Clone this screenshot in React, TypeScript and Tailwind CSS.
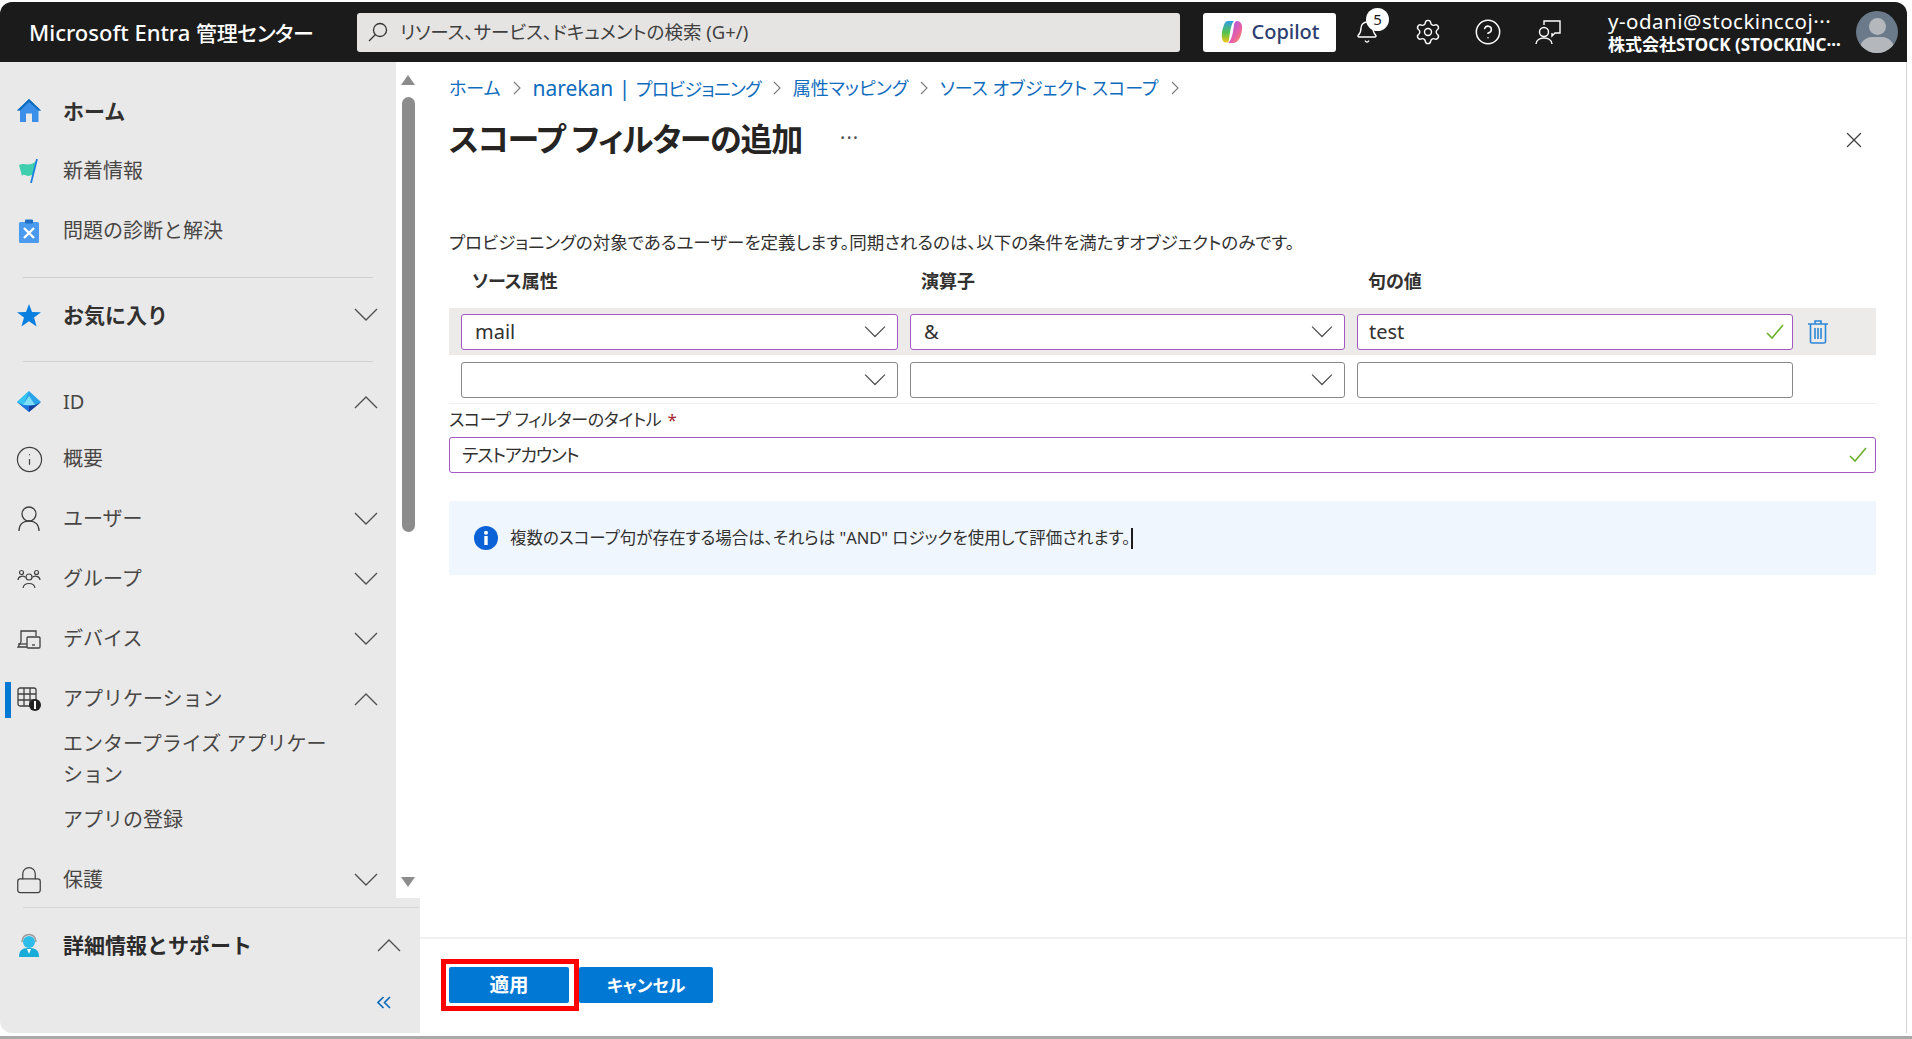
import { Bell, CircleHelp, Info, Lock, Settings, X } from "lucide-react";
import type { ReactNode } from "react";

const Chevron = ({ up = false, className = "" }: { up?: boolean; className?: string }) => (
  <svg viewBox="0 0 24 14" className={`w-6 h-[14px] ${className}`} fill="none" stroke="#505050" strokeWidth="1.4">
    <path d={up ? "M1 13 L12 2 L23 13" : "M1 1 L12 12 L23 1"} />
  </svg>
);

const Crumb = () => (
  <svg viewBox="0 0 8 14" className="w-2 h-[14px] mx-3 shrink-0" fill="none" stroke="#7a7a7a" strokeWidth="1.1">
    <path d="M1 1 L7 7 L1 13" />
  </svg>
);

const Check = () => (
  <svg viewBox="0 0 18 16" className="w-[18px] h-4" fill="none" stroke="#6bb12f" strokeWidth="1.6">
    <path d="M1 9 L6 14 L17 1" />
  </svg>
);

const HomeIcon = () => (
  <svg viewBox="0 0 24 24" className="w-6 h-6">
    <path d="M12 0 L24 11.5 L21.5 11.5 L21.5 23 L3 23 L3 11.5 L0 11.5 Z" fill="#3b8fe8" />
    <path d="M12 0 L24 11.5 L21.5 11.5 L12 3 L3 11.5 L0 11.5 Z" fill="#0f6cbd" />
    <rect x="9" y="14.5" width="6" height="8.5" fill="#e9e9e9" />
  </svg>
);

const FlagIcon = () => (
  <svg viewBox="0 0 24 24" className="w-6 h-6">
    <path d="M2 6 C8 3 13 9 20 1 L16 15 C10 20 7 13 5 17 Z" fill="#3fcfae" />
    <path d="M20 0 L14 24" stroke="#1f7fe0" strokeWidth="1.8" />
  </svg>
);

const ClipIcon = () => (
  <svg viewBox="0 0 24 24" className="w-6 h-6">
    <rect x="2" y="3" width="20" height="21" rx="1.5" fill="#4a9bf0" />
    <rect x="8" y="0.5" width="8" height="4" rx="1" fill="#1f6fc4" />
    <path d="M7 9 L17 19 M17 9 L7 19" stroke="#fff" strokeWidth="2.4" />
  </svg>
);

const StarIcon = () => (
  <svg viewBox="0 0 24 24" className="w-6 h-6">
    <path d="M12 1 L15 9 L24 9.2 L17 14.6 L19.6 23.4 L12 18.2 L4.4 23.4 L7 14.6 L0 9.2 L9 9 Z" fill="#0b7fe0" />
  </svg>
);

const EntraIcon = () => (
  <svg viewBox="0 0 24 24" className="w-6 h-6">
    <path d="M12 1 L24 12 L12 22 L0 12 Z" fill="#2aa3e8" />
    <path d="M12 1 L0 12 L6 16 Z" fill="#36c5f0" />
    <path d="M12 6 L18 15 L6 15 Z" fill="#7fe0f7" />
    <path d="M24 12 L12 22 L12 16 L18 15 Z" fill="#1b3f9c" />
    <path d="M0 12 L12 22 L12 16 L6 15 Z" fill="#2172d8" />
  </svg>
);

const UserIcon = () => (
  <svg viewBox="0 0 24 26" className="w-6 h-[26px]" fill="none" stroke="#404040" strokeWidth="1.3">
    <circle cx="12" cy="8" r="7" />
    <path d="M2 25 C2 18 6 15 12 15 C18 15 22 18 22 25" />
  </svg>
);

const GroupIcon = () => (
  <svg viewBox="0 0 24 24" className="w-6 h-6" fill="none" stroke="#404040" strokeWidth="1.2">
    <circle cx="12" cy="10" r="3" />
    <path d="M6 21 C7 15 17 15 18 21" />
    <circle cx="4.5" cy="5.5" r="2" />
    <circle cx="19.5" cy="5.5" r="2" />
    <path d="M1 13 C1 9 7 8 8.5 10.5 M23 13 C23 9 17 8 15.5 10.5" />
  </svg>
);

const DeviceIcon = () => (
  <svg viewBox="0 0 24 24" className="w-6 h-6" fill="none" stroke="#404040" strokeWidth="1.3">
    <path d="M4 15 L4 4 L19 4 L19 9" />
    <path d="M1 17 L10 17" />
    <rect x="10" y="10" width="13" height="11" rx="1" />
    <path d="M15 18 L18 18" />
    <path d="M4 15 L1 20 L10 20" />
  </svg>
);

const AppsIcon = () => (
  <svg viewBox="0 0 24 24" className="w-6 h-6">
    <g fill="none" stroke="#404040" strokeWidth="1.3">
      <rect x="1" y="1" width="18" height="18" rx="2" />
      <path d="M1 7 L19 7 M1 13 L19 13 M7 1 L7 19 M13 1 L13 19" />
    </g>
    <circle cx="18" cy="18" r="6" fill="#222" />
    <path d="M18 14 L18 22" stroke="#fff" strokeWidth="2" />
  </svg>
);

const SupportIcon = () => (
  <svg viewBox="0 0 24 24" className="w-6 h-6">
    <path d="M5 9 C5 -1 19 -1 19 9" fill="none" stroke="#9a9a9a" strokeWidth="1.5" />
    <circle cx="12" cy="9" r="6" fill="#2dbde8" />
    <path d="M2 24 C2 15 8 15 12 15 C16 15 22 15 22 24 Z" fill="#19acd8" />
    <path d="M10 16 L14 16 L12 21 Z" fill="#fff" />
  </svg>
);

const NavRow = ({
  icon,
  label,
  chevron,
  bold = false,
  height = "h-[60px]",
  active = false,
}: {
  icon: ReactNode;
  label: string;
  chevron?: "up" | "down";
  bold?: boolean;
  height?: string;
  active?: boolean;
}) => (
  <div className={`relative flex items-center ${height} pl-[17px] pr-[18px]`}>
    {active && <div className="absolute left-[5px] top-[13px] w-[6px] h-9 bg-[#0078d4]" />}
    <div className="w-6 h-6 flex items-center justify-center shrink-0">{icon}</div>
    <span className={`ml-[22px] flex-1 leading-none ${bold ? "text-[21px] font-bold text-[#323130]" : "text-[20px] text-[#484644]"}`}>
      {label}
    </span>
    {chevron && <Chevron up={chevron === "up"} />}
  </div>
);

const SelectBox = ({ value, active, width }: { value?: string; active?: boolean; width: string }) => (
  <div
    className={`${width} h-9 bg-white border rounded-[3px] flex items-center pl-[13px] pr-[10px] ${
      active ? "border-[#a259c4]" : "border-[#8a8886]"
    }`}
  >
    <span className="flex-1 text-[20px] leading-none text-[#323130]">{value}</span>
    <Chevron className="scale-90" />
  </div>
);

const TextBox = ({
  value,
  active,
  width,
  inset,
  text = "text-[20px]",
}: {
  value?: string;
  active?: boolean;
  width: string;
  inset: string;
  text?: string;
}) => (
  <div
    className={`${width} h-9 bg-white border rounded-[3px] flex items-center ${inset} pr-[8px] ${
      active ? "border-[#a259c4]" : "border-[#8a8886]"
    }`}
  >
    <span className={`flex-1 ${text} leading-none text-[#323130]`}>{value}</span>
    {active && <Check />}
  </div>
);

export default function App() {
  return (
    <div className="w-full h-screen overflow-hidden bg-white pt-[2px] flex flex-col font-['Noto_Sans','Noto_Sans_CJK_JP',sans-serif] [font-feature-settings:'palt']">
      <div className="h-[60px] w-[1907px] shrink-0 bg-[#1b1b1b] rounded-t-[12px] flex items-center text-white">
        <div className="w-[357px] pl-[29px] text-[22px] leading-none font-medium whitespace-nowrap">
          Microsoft Entra <span className="text-[21px] tracking-[-0.4px]">管理センター</span>
        </div>
        <div className="w-[823px] h-[39px] bg-[#e6e4e2] rounded-[3px] flex items-center pl-[11px] text-[#404040]">
          <svg viewBox="0 0 20 20" className="w-5 h-5" fill="none" stroke="#333" strokeWidth="1.3">
            <circle cx="12" cy="8" r="6.5" />
            <path d="M7.5 12.5 L1 19" />
          </svg>
          <span className="ml-[12px] text-[18.5px] leading-none">リソース、サービス、ドキュメントの検索 (G+/)</span>
        </div>
        <div className="ml-[23px] w-[133px] h-[39px] bg-white rounded-[3px] flex items-center justify-center">
          <svg viewBox="0 0 24 24" className="w-6 h-6">
            <defs>
              <linearGradient id="cp1" x1="0" y1="0" x2="0" y2="1">
                <stop offset="0" stopColor="#2f9ee8" />
                <stop offset="0.55" stopColor="#57c24a" />
                <stop offset="1" stopColor="#f5c518" />
              </linearGradient>
              <linearGradient id="cp2" x1="0" y1="0" x2="1" y2="1">
                <stop offset="0" stopColor="#8a5cf0" />
                <stop offset="0.6" stopColor="#e95fa8" />
                <stop offset="1" stopColor="#f59a3c" />
              </linearGradient>
            </defs>
            <path d="M8 1 L14 1 C11 4 10 12 9 20 C8.5 23 6 23 4 22 C1 20 1 12 4 5 C5 2 6 1 8 1 Z" fill="url(#cp1)" />
            <path d="M17 1 C20 1 23 4 22 10 C21 17 18 23 13 23 L8 23 C12 20 13 12 14 5 C14.5 2 15.5 1 17 1 Z" fill="url(#cp2)" />
          </svg>
          <span className="ml-[8px] text-[20px] leading-none font-medium text-[#2c3e70]">Copilot</span>
        </div>
        <div className="relative ml-[19px] w-6 h-6 flex items-center justify-center">
          <Bell className="w-6 h-6" strokeWidth={1.4} />
          <div className="absolute -top-[12px] left-[11px] w-[23px] h-[23px] rounded-full bg-white text-[#1b1b1b] text-[15px] leading-none flex items-center justify-center">
            5
          </div>
        </div>
        <Settings className="ml-[35px] w-7 h-7" strokeWidth={1.2} />
        <CircleHelp className="ml-[32px] w-7 h-7" strokeWidth={1.3} />
        <svg viewBox="0 0 26 26" className="ml-[33px] w-[26px] h-[26px]" fill="none" stroke="#fff" strokeWidth="1.4">
          <path d="M9 6 L9 2 L25 2 L25 14 L20 14 L17 17 L17 14" />
          <circle cx="9" cy="13" r="4.5" />
          <path d="M1 25 C1 17 17 17 17 25" />
        </svg>
        <div className="ml-[47px] w-[236px] flex flex-col gap-[1px]">
          <span className="text-[20.5px] tracking-[0.5px] leading-[25px] whitespace-nowrap">y-odani@stockinccoj···</span>
          <span className="text-[17px] leading-[20px] font-bold whitespace-nowrap">株式会社STOCK (STOCKINC···</span>
        </div>
        <div className="ml-[12px] w-[42px] h-[42px] rounded-full bg-[#6b7a8a] overflow-hidden flex flex-col items-center">
          <div className="mt-[7px] w-[17px] h-[20px] rounded-full bg-[#b4b8bc]" />
          <div className="mt-[2px] w-[34px] h-[20px] rounded-t-[12px] bg-[#b4b8bc]" />
        </div>
      </div>

      <div className="w-[1907px] flex-1 min-h-0 flex border-r border-[#d6d6d6]">
        <aside className="w-[420px] shrink-0 flex flex-col rounded-bl-[12px] overflow-hidden bg-[#e9e9e9] [font-feature-settings:normal]">
          <div className="h-[836px] flex bg-white">
            <nav className="w-[396px] h-full overflow-hidden bg-[#e9e9e9] pt-[19px]">
              <NavRow icon={<HomeIcon />} label="ホーム" bold />
              <NavRow icon={<FlagIcon />} label="新着情報" />
              <NavRow icon={<ClipIcon />} label="問題の診断と解決" />
              <div className="mx-[23px] mt-[16px] h-px bg-[#cfcfcf]" />
              <NavRow icon={<StarIcon />} label="お気に入り" bold chevron="down" height="h-[74px]" />
              <div className="mx-[23px] mt-[9px] h-px bg-[#cfcfcf]" />
              <div className="h-[13px]" />
              <NavRow icon={<EntraIcon />} label="ID" chevron="up" height="h-[54px]" />
              <NavRow icon={<Info className="w-[29px] h-[29px] shrink-0 text-[#404040]" strokeWidth={1} />} label="概要" />
              <NavRow icon={<UserIcon />} label="ユーザー" chevron="down" />
              <NavRow icon={<GroupIcon />} label="グループ" chevron="down" />
              <NavRow icon={<DeviceIcon />} label="デバイス" chevron="down" />
              <NavRow icon={<AppsIcon />} label="アプリケーション" chevron="up" active />
              <div className="pl-[63px] pr-[60px] -mt-[1px] text-[20px] leading-[31px] text-[#484644]">エンタープライズ アプリケーション</div>
              <div className="pl-[63px] mt-[14px] text-[20px] leading-[31px] text-[#484644]">アプリの登録</div>
              <div className="h-[15px]" />
              <NavRow icon={<Lock className="w-[30px] h-[30px] shrink-0 text-[#404040]" strokeWidth={1} />} label="保護" chevron="down" height="h-[59px]" />
            </nav>
            <div className="w-6 flex flex-col items-center">
              <div className="mt-[13px] w-0 h-0 border-x-[7px] border-x-transparent border-b-[10px] border-b-[#8c8c8c]" />
              <div className="mt-[12px] w-[13px] h-[435px] rounded-full bg-[#8c8c8c]" />
              <div className="mt-auto mb-[11px] w-0 h-0 border-x-[7px] border-x-transparent border-t-[10px] border-t-[#8c8c8c]" />
            </div>
          </div>
          <div className="flex-1 pt-[9px]">
            <div className="ml-[23px] mr-[1px] h-px bg-[#d6d6d6]" />
            <div className="relative flex items-center h-[74px] pl-[17px] pr-[19px]">
              <SupportIcon />
              <span className="ml-[22px] flex-1 text-[21px] leading-none font-bold text-[#2b2b2b]">詳細情報とサポート</span>
              <Chevron up />
            </div>
            <div className="flex justify-end pr-[29px] pt-[14px]">
              <svg viewBox="0 0 14 13" className="w-[14px] h-[13px]" fill="none" stroke="#0f6cbd" strokeWidth="1.7">
                <path d="M6.5 1 L1 6.5 L6.5 12 M13 1 L7.5 6.5 L13 12" />
              </svg>
            </div>
          </div>
        </aside>

        <main className="flex-1 min-w-0 flex flex-col pl-[29px] pr-[30px]">
          <div className="mt-[12px] h-7 flex items-center text-[18px] leading-none text-[#0f6cbd] whitespace-nowrap">
            <span>ホーム</span>
            <Crumb />
            <span>
              <span className="text-[21px]">narekan | </span>
              <span className="tracking-[-0.7px]">プロビジョニング</span>
            </span>
            <Crumb />
            <span>属性マッピング</span>
            <Crumb />
            <span>ソース オブジェクト スコープ</span>
            <Crumb />
          </div>
          <div className="mt-[15px] h-11 flex items-center">
            <h1 className="text-[32px] leading-none font-semibold tracking-[-1.2px] text-[#252423]">スコープ フィルターの追加</h1>
            <span className="ml-[38px] text-[20px] tracking-[1px] leading-none text-[#505050] -translate-y-[1px]">···</span>
            <X className="ml-auto mr-[9px] mt-[2px] w-[26px] h-[26px] text-[#404040]" strokeWidth={1.2} />
          </div>
          <div className="mt-[68px] h-7 flex items-center text-[17.5px] leading-none text-[#323130] whitespace-nowrap">
            プロビジョニングの対象であるユーザーを定義します。同期されるのは、以下の条件を満たすオブジェクトのみです。
          </div>
          <div className="mt-[10px] h-7 flex items-center text-[18px] leading-none font-bold text-[#323130]">
            <span className="ml-[23px] w-[449px]">ソース属性</span>
            <span className="w-[447px]">演算子</span>
            <span>句の値</span>
          </div>
          <div className="mt-[13px] h-[47px] bg-[#edebe9] flex items-center pl-[12px] gap-[12px]">
            <SelectBox value="mail" active width="w-[437px]" />
            <SelectBox value="&" active width="w-[435px]" />
            <TextBox value="test" active width="w-[436px]" inset="pl-[11px]" />
            <svg viewBox="0 0 20 24" className="ml-[3px] w-5 h-6" fill="none" stroke="#2b88d8" strokeWidth="1.6">
              <path d="M0 4 L20 4 M7 4 L7 1 L13 1 L13 4" />
              <path d="M2.5 4 L2.5 22 C2.5 23 3 23 4 23 L16 23 C17 23 17.5 23 17.5 22 L17.5 4" />
              <path d="M7 8 L7 19 M10 8 L10 19 M13 8 L13 19" />
            </svg>
          </div>
          <div className="h-[49px] border-b border-[#f0efee] flex items-start pt-[7px] pl-[12px] gap-[12px]">
            <SelectBox width="w-[437px]" />
            <SelectBox width="w-[435px]" />
            <TextBox width="w-[436px]" inset="pl-[11px]" />
          </div>
          <div className="h-7 flex items-center text-[17px] tracking-[-0.3px] leading-none text-[#323130] mt-px">
            スコープ フィルターのタイトル<span className="ml-[6px] text-[#a4262c]">*</span>
          </div>
          <div className="mt-[4px]">
            <TextBox value="テストアカウント" active width="w-full" inset="pl-[12px]" text="text-[18px] tracking-[-1.2px]" />
          </div>
          <div className="mt-[28px] h-[74px] bg-[#eff6fe] rounded-[2px] flex items-center pl-[25px]">
            <svg viewBox="0 0 24 24" className="w-6 h-6">
              <circle cx="12" cy="12" r="12" fill="#0b62d6" />
              <rect x="10.3" y="10" width="3.4" height="9" fill="#fff" />
              <circle cx="12" cy="6.8" r="2" fill="#fff" />
            </svg>
            <span className="ml-[12px] text-[16.5px] leading-none text-[#323130] whitespace-nowrap">
              複数のスコープ句が存在する場合は、それらは "AND" ロジックを使用して評価されます。
            </span>
            <div className="ml-[1px] w-[2px] h-[21px] bg-[#1b1b1b]" />
          </div>
          <div className="mt-auto -mx-[29px] -mr-[30px] h-[96px] border-t-2 border-[#f0f0f0] flex items-start pl-[29px] pt-[28px]">
            <div className="relative w-[120px] h-9 bg-[#0078d4] rounded-[2px] text-white text-[19.5px] leading-none font-bold flex items-center justify-center">
              適用
              <div className="absolute -inset-y-2 -left-2 -right-[10px] border-[5px] border-[#ff0000]" />
            </div>
            <div className="ml-[10px] w-[134px] h-9 bg-[#0078d4] rounded-[2px] text-white text-[17px] leading-none font-bold flex items-center justify-center">
              キャンセル
            </div>
          </div>
        </main>
      </div>
      <div className="h-[6px] shrink-0 flex flex-col">
        <div className="h-[3px] bg-white" />
        <div className="h-[3px] bg-[#a9a9a9]" />
      </div>
    </div>
  );
}
